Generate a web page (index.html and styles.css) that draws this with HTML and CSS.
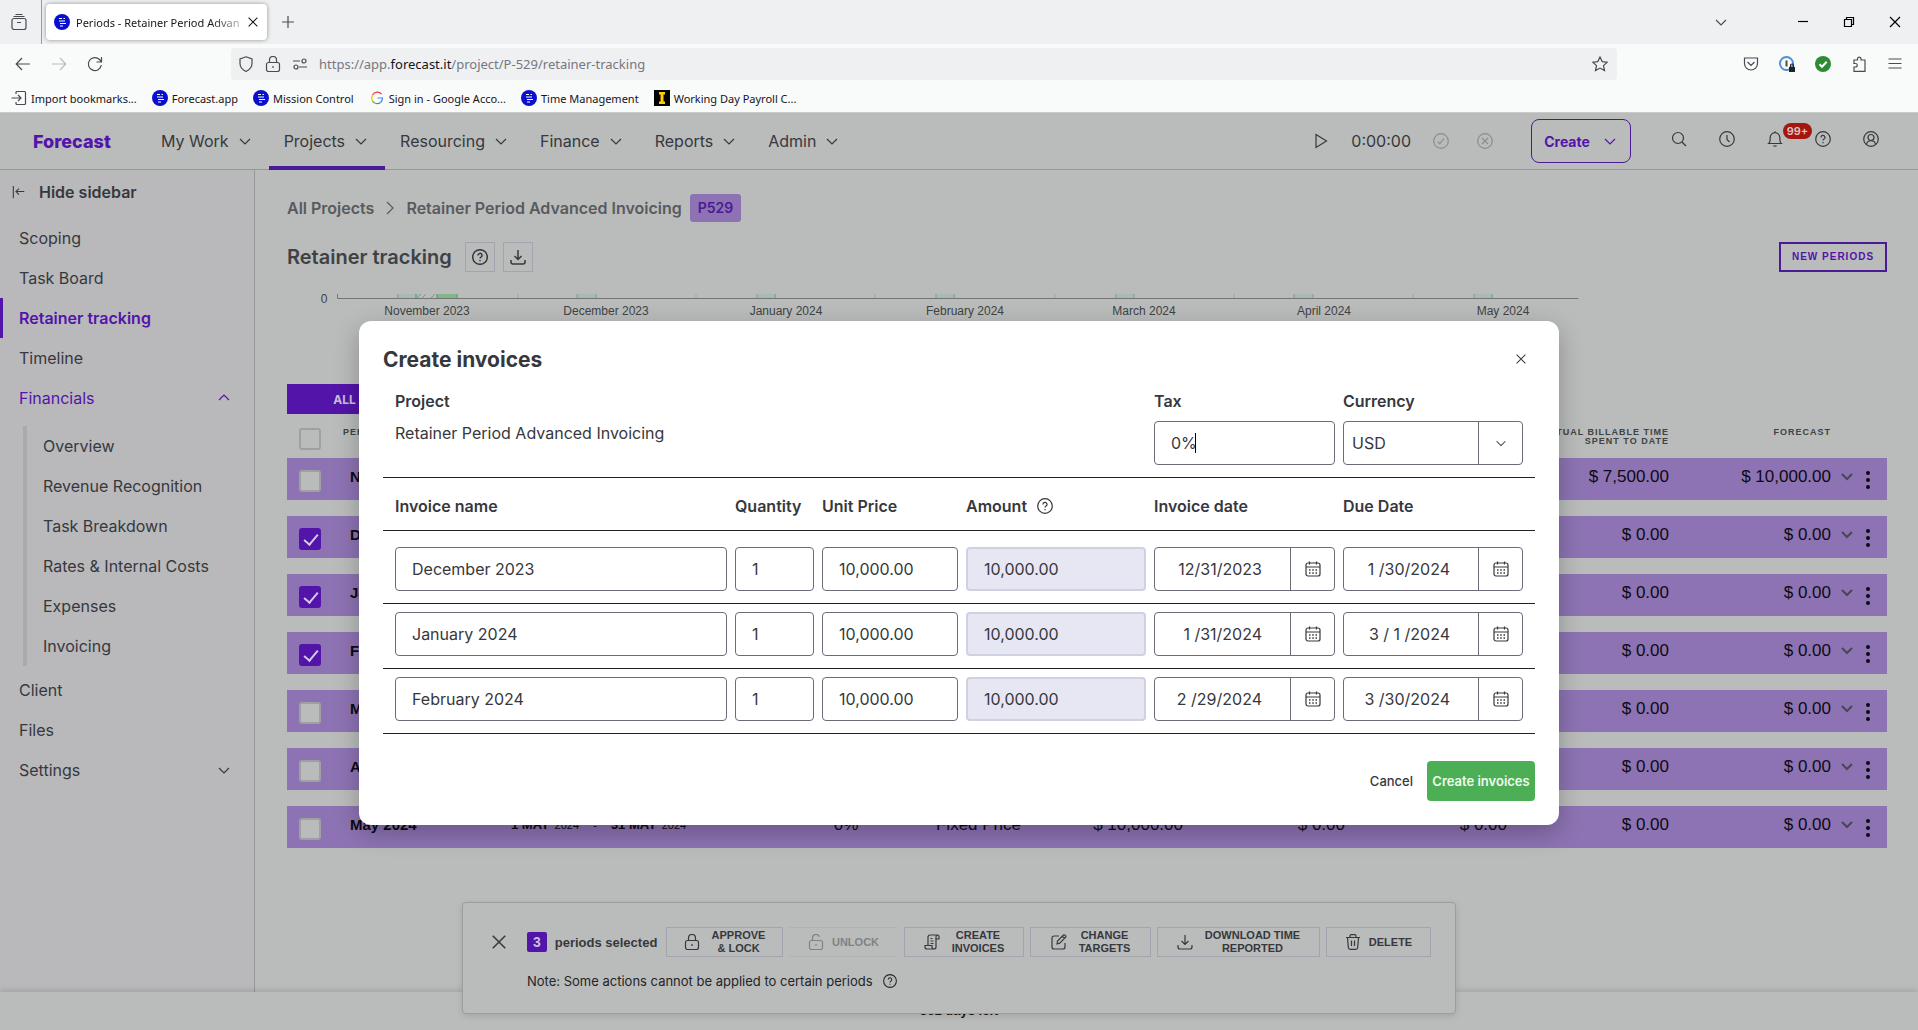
FILE: index.html
```html
<!DOCTYPE html>
<html lang="en">
<head>
    <meta charset="UTF-8">
    <meta name="viewport" content="width=device-width, initial-scale=1.0">
    <title>Periods - Retainer Period Advanced Invoicing</title>
    <link rel="stylesheet" href="styles.css">
</head>
<body>
    <!-- Shared icons -->
    <svg class="sprite" aria-hidden="true">
        <symbol id="i-down" viewBox="0 0 16 16"><path d="M3 6l5 5 5-5"/></symbol>
        <symbol id="i-up" viewBox="0 0 16 16"><path d="M3 10l5-5 5 5"/></symbol>
        <symbol id="i-right" viewBox="0 0 16 16"><path d="M5 2l6 6-6 6"/></symbol>
        <symbol id="i-x" viewBox="0 0 16 16"><path d="M3 3l10 10M13 3L3 13"/></symbol>
        <symbol id="i-help" viewBox="0 0 16 16"><circle cx="8" cy="8" r="7.3"/><path d="M6 6.4a2 2 0 1 1 3 1.7c-.7.4-1 .8-1 1.500M8 11v1.200"/></symbol>
        <symbol id="i-download" viewBox="0 0 16 16"><path d="M8 1v9.500M4.500 7L8 10.500 11.500 7M1 11v2a2 2 0 0 0 2 2h10a2 2 0 0 0 2-2v-2"/></symbol>
        <symbol id="i-logo" viewBox="0 0 16 16"><circle cx="8" cy="8" r="8" fill="#0a0fce" stroke="none"/><path d="M5 4.500h3M9.500 4.500h1.500M5 7h6M6 9.500h6M6 12h3" stroke="#fff" stroke-width="1"/></symbol>
        <symbol id="i-cal" viewBox="0 0 16 16"><rect x="1" y="2" width="14" height="13" rx="2"/><path d="M1 6h14M4.500 .5v3M11.500 .5v3"/><path d="M4 9h1.500M7.250 9h1.500M10.500 9H12M4 12h1.500M7.250 12h1.500M10.500 12H12" stroke-width="1.500"/></symbol>
        <symbol id="i-dots" viewBox="0 0 6 18"><circle cx="3" cy="2" r="2"/><circle cx="3" cy="9" r="2"/><circle cx="3" cy="16" r="2"/></symbol>
        <symbol id="i-lock" viewBox="0 0 16 16"><rect x="1.500" y="6.500" width="13" height="9" rx="2"/><path d="M4.500 6.500V4a3.500 3.500 0 0 1 7 0v2.500M8 10v2"/></symbol>
        <symbol id="i-unlock" viewBox="0 0 16 16"><rect x="1.500" y="6.500" width="13" height="9" rx="2"/><path d="M4.500 6.500V4a3.500 3.500 0 0 1 6.800-1.200M8 10v2"/></symbol>
    </svg>

    <div class="browser">
        <div class="tab-bar">
            <button class="tab-view" aria-label="Recent browsing">
                <svg class="icon16" viewBox="0 0 16 16"><rect x="1" y="4.500" width="14" height="11" rx="2"/><path d="M2.500 2.500h11M4.500 .5h7M6 8.500h4"/></svg>
            </button>
            <div class="tab">
                <svg class="icon16"><use href="#i-logo"/></svg>
                <span class="tab-title">Periods - Retainer Period Advan</span>
                <button class="tab-close" aria-label="Close tab"><svg class="icon14"><use href="#i-x"/></svg></button>
            </div>
            <button class="tab-new" aria-label="New tab"><svg class="icon16" viewBox="0 0 16 16"><path d="M8 2v12M2 8h12"/></svg></button>
            <div class="window-buttons">
                <button aria-label="List tabs"><svg class="icon16"><use href="#i-down"/></svg></button>
                <span class="window-gap"></span>
                <button class="dark" aria-label="Minimize"><svg class="icon12" viewBox="0 0 12 12"><path d="M1 5.500h10"/></svg></button>
                <button class="dark" aria-label="Restore"><svg class="icon12" viewBox="0 0 12 12"><path d="M1.500 3.500h7v7h-7zM3.500 3V1.500h7v7H9"/></svg></button>
                <button class="dark" aria-label="Close"><svg class="icon12" viewBox="0 0 12 12"><path d="M1 1l10 10M11 1L1 11"/></svg></button>
            </div>
        </div>

        <div class="nav-bar">
            <div class="nav-buttons">
                <button aria-label="Back"><svg class="icon16" viewBox="0 0 16 16"><path d="M15 8H1.500M7 2L1.200 8 7 14"/></svg></button>
                <button class="faded" aria-label="Forward"><svg class="icon16" viewBox="0 0 16 16"><path d="M1 8h13.500M9 2l5.800 6L9 14"/></svg></button>
                <button aria-label="Reload"><svg class="icon16" viewBox="0 0 16 16"><path d="M14.300 9A6.500 6.500 0 1 1 12.500 3.500L14.300 5.500M14.500 1v5h-5"/></svg></button>
            </div>
            <div class="url-box">
                <svg class="icon16" viewBox="0 0 16 16"><path d="M8 .8L14 3v4.500c0 4-3 6.500-6 8-3-1.500-6-4-6-8V3z"/></svg>
                <svg class="icon16"><use href="#i-lock"/></svg>
                <svg class="icon16" viewBox="0 0 16 16"><path d="M1 5h7M7 11h8"/><circle cx="12" cy="5" r="2"/><circle cx="4" cy="11" r="2"/></svg>
                <span class="url">https://app.<b>forecast.it</b>/project/P-529/retainer-tracking</span>
                <svg class="icon16 star" viewBox="0 0 16 16"><path d="M8 1l2.200 4.600 5 .6-3.700 3.400 1 5L8 12.100l-4.500 2.500 1-5L.8 6.200l5-.6z"/></svg>
            </div>
            <div class="ext-buttons">
                <svg class="icon16" viewBox="0 0 16 16"><path d="M1.500 2h13v5.500a6.500 6.500 0 0 1-13 0zM4.500 6L8 9.500 11.500 6"/></svg>
                <svg class="icon16" viewBox="0 0 16 16"><circle cx="7.500" cy="7.500" r="6.500" stroke="#4f8fdb" stroke-width="2"/><path d="M7.500 4.500v6" stroke-width="2"/><path d="M10 11h6v5h-6z" fill="#222" stroke="none"/><path d="M11.500 11V9.500a1.500 1.500 0 0 1 3 0V11" stroke="#222"/></svg>
                <svg class="icon16" viewBox="0 0 16 16"><circle cx="8" cy="8" r="8" fill="#2f8a35" stroke="none"/><path d="M4.500 8.200L7 10.800l4.700-5" stroke="#fff" stroke-width="2"/></svg>
                <svg class="icon16" viewBox="0 0 16 16"><path d="M3 15.300V11h1.500a1.700 1.700 0 0 0 0-3.500H3V4h3.500V2.500a1.800 1.800 0 0 1 3.500 0V4h4v11.300z"/></svg>
                <svg class="icon16" viewBox="0 0 16 16"><path d="M1.500 3h13M1.500 7.500h13M1.500 12h13"/></svg>
            </div>
        </div>

        <div class="bookmarks">
            <a href="#"><svg class="icon16" viewBox="0 0 16 16"><path d="M5 4V2.500a1 1 0 0 1 1-1h7.500a1 1 0 0 1 1 1v11a1 1 0 0 1-1 1H6a1 1 0 0 1-1-1V12M.5 8H10M7 5l3 3-3 3"/></svg>Import bookmarks...</a>
            <a href="#"><svg class="icon16"><use href="#i-logo"/></svg>Forecast.app</a>
            <a href="#"><svg class="icon16"><use href="#i-logo"/></svg>Mission Control</a>
            <a href="#"><svg class="icon16" viewBox="0 0 16 16" stroke-width="2"><path d="M12.600 4.200A5.500 5.500 0 0 0 3.500 5" stroke="#ea4335"/><path d="M3.500 5a6 6 0 0 0 0 6" stroke="#fbbc05"/><path d="M3.500 11a5.500 5.500 0 0 0 8 1.500" stroke="#34a853"/><path d="M11.500 12.500A5.500 5.500 0 0 0 13.500 8H8.500" stroke="#4285f4"/></svg>Sign in - Google Acco...</a>
            <a href="#"><svg class="icon16"><use href="#i-logo"/></svg>Time Management</a>
            <a href="#"><svg class="icon16" viewBox="0 0 16 16"><path d="M0 0h16v16H0z" fill="#000" stroke="none"/><path d="M5 2h6v2.500H9.500v7H11V14H5v-2.500h1.500v-7H5z" fill="#fc0" stroke="none"/></svg>Working Day Payroll C...</a>
        </div>
    </div>

    <div class="app">
        <header class="app-header">
            <a class="logo" href="#">Forecast</a>
            <nav class="main-nav">
                <a href="#">My Work <svg class="icon16"><use href="#i-down"/></svg></a>
                <a href="#" class="active">Projects <svg class="icon16"><use href="#i-down"/></svg></a>
                <a href="#">Resourcing <svg class="icon16"><use href="#i-down"/></svg></a>
                <a href="#">Finance <svg class="icon16"><use href="#i-down"/></svg></a>
                <a href="#">Reports <svg class="icon16"><use href="#i-down"/></svg></a>
                <a href="#">Admin <svg class="icon16"><use href="#i-down"/></svg></a>
            </nav>
            <div class="timer">
                <button aria-label="Start timer"><svg class="icon16" viewBox="0 0 16 16"><path d="M3 1.500L13.500 8 3 14.500z"/></svg></button>
                <span>0:00:00</span>
                <button class="faded" aria-label="Save timer"><svg class="icon16" viewBox="0 0 16 16"><circle cx="8" cy="8" r="7.300"/><path d="M4.800 8.500l2 2.300 4.200-5.500"/></svg></button>
                <button class="faded" aria-label="Discard timer"><svg class="icon16" viewBox="0 0 16 16"><circle cx="8" cy="8" r="7.300"/><path d="M5 5l6 6M11 5l-6 6"/></svg></button>
            </div>
            <button class="create-button">Create <svg class="icon16"><use href="#i-down"/></svg></button>
            <div class="header-icons">
                <button aria-label="Search"><svg class="icon16" viewBox="0 0 16 16"><circle cx="7" cy="7" r="5.500"/><path d="M11 11l4 4"/></svg></button>
                <button aria-label="Recent"><svg class="icon16" viewBox="0 0 16 16"><circle cx="8" cy="8" r="7.300"/><path d="M8 4v4.500l2.500 2.500"/></svg></button>
                <button class="bell" aria-label="Notifications"><svg class="icon16" viewBox="0 0 16 16"><path d="M1.800 12.500C3 11.500 3.200 10 3.200 6.500a4.800 4.800 0 0 1 9.600 0c0 3.500.2 5 1.400 6zM8 1.700V.3M6.500 14.500c.5 1 2.500 1 3 0"/></svg><span class="badge">99+</span></button>
                <button aria-label="Help"><svg class="icon16"><use href="#i-help"/></svg></button>
                <button aria-label="Account"><svg class="icon16" viewBox="0 0 16 16"><circle cx="8" cy="8" r="7.300"/><circle cx="8" cy="6.500" r="3"/><path d="M3.500 13.500c.5-5 8.500-5 9 0"/></svg></button>
            </div>
        </header>

        <div class="app-body">
            <aside class="sidebar">
                <button class="hide-sidebar"><svg class="icon14" viewBox="0 0 16 16"><path d="M1.500 1v14M14 7.500H4.500M8 4L4.500 7.500 8 11"/></svg>Hide sidebar</button>
                <nav class="side-nav">
                    <a href="#">Scoping</a>
                    <a href="#">Task Board</a>
                    <a href="#" class="current">Retainer tracking</a>
                    <a href="#">Timeline</a>
                    <a href="#" class="open">Financials <svg class="icon16"><use href="#i-up"/></svg></a>
                    <div class="sub-nav">
                        <a href="#">Overview</a>
                        <a href="#">Revenue Recognition</a>
                        <a href="#">Task Breakdown</a>
                        <a href="#">Rates &amp; Internal Costs</a>
                        <a href="#">Expenses</a>
                        <a href="#">Invoicing</a>
                    </div>
                    <a href="#">Client</a>
                    <a href="#">Files</a>
                    <a href="#">Settings <svg class="icon16"><use href="#i-down"/></svg></a>
                </nav>
            </aside>

            <main class="content">
                <div class="breadcrumb">
                    <a href="#">All Projects</a>
                    <svg class="icon16"><use href="#i-right"/></svg>
                    <a href="#">Retainer Period Advanced Invoicing</a>
                    <span class="project-tag">P529</span>
                </div>
                <div class="title-row">
                    <h1>Retainer tracking</h1>
                    <button class="square" aria-label="Help"><svg class="icon16"><use href="#i-help"/></svg></button>
                    <button class="square" aria-label="Download"><svg class="icon16"><use href="#i-download"/></svg></button>
                    <button class="new-periods">NEW PERIODS</button>
                </div>

                <div class="chart">
                    <svg width="1300" height="30" viewBox="0 0 1300 30">
                        <path d="M110 0h22v4h-22zM290 0h19v4h-19zM470 0h19v4h-19zM649 0h19v4h-19zM829 0h18v4h-18zM1007 0h19v4h-19zM1187 0h19v4h-19z" fill="#a9b9b3" stroke="none"/>
                        <path d="M150 0h20v4h-20z" fill="#83b58a" stroke="none"/>
                        <path d="M130 4l4-4M135 4l4-4M144 4l4-4" stroke="#8a8f8d"/>
                        <path d="M111 0v4M290 0v4M309 0v4M470 0v4M488 0v4M649 0v4M667 0v4M829 0v4M847 0v4M1007 0v4M1026 0v4M1187 0v4M1205 0v4" stroke="#7d9b90"/>
                        <path d="M129 0v4M150 0v4M170 0v4" stroke="#4f9a58"/>
                        <path d="M231 0v4M409 0v4M588 0v4M768 0v4M947 0v4M1126 0v4" stroke="#a0a3a2"/>
                        <path d="M50.500 0v4.500h1241" stroke="#747676"/>
                        <text x="37" y="9">0</text>
                        <text x="140" y="21">November 2023</text>
                        <text x="319" y="21">December 2023</text>
                        <text x="499" y="21">January 2024</text>
                        <text x="678" y="21">February 2024</text>
                        <text x="857" y="21">March 2024</text>
                        <text x="1037" y="21">April 2024</text>
                        <text x="1216" y="21">May 2024</text>
                    </svg>
                </div>

                <button class="filter-all">ALL</button>

                <table class="periods">
                    <colgroup>
                        <col class="c-check"><col class="c-name"><col><col class="c-pct"><col class="c-type">
                        <col class="c-money"><col class="c-money"><col class="c-money"><col class="c-money"><col class="c-money">
                        <col class="c-actions">
                    </colgroup>
                    <thead>
                        <tr>
                            <th><input type="checkbox" aria-label="Select all"></th>
                            <th class="left">PERIOD</th><th></th><th></th><th></th><th></th><th></th><th></th>
                            <th>ACTUAL BILLABLE TIME SPENT TO DATE</th>
                            <th>FORECAST</th>
                            <th></th>
                        </tr>
                    </thead>
                    <tbody>
                        <tr>
                            <td><input type="checkbox" aria-label="November 2023"></td>
                            <td class="name">November 2023</td>
                            <td class="dates"><b>1 NOV</b> 2023 <i>-</i> <b>30 NOV</b> 2023</td>
                            <td class="pct">0%</td><td>Fixed Price</td><td>$ 10,000.00</td><td>$ 0.00</td><td>$ 0.00</td><td>$ 7,500.00</td><td>$ 10,000.00</td>
                            <td class="actions"><svg class="icon16"><use href="#i-down"/></svg><svg class="dots"><use href="#i-dots"/></svg></td>
                        </tr>
                        <tr>
                            <td><input type="checkbox" checked aria-label="December 2023"></td>
                            <td class="name">December 2023</td>
                            <td class="dates"><b>1 DEC</b> 2023 <i>-</i> <b>31 DEC</b> 2023</td>
                            <td class="pct">0%</td><td>Fixed Price</td><td>$ 10,000.00</td><td>$ 0.00</td><td>$ 0.00</td><td>$ 0.00</td><td>$ 0.00</td>
                            <td class="actions"><svg class="icon16"><use href="#i-down"/></svg><svg class="dots"><use href="#i-dots"/></svg></td>
                        </tr>
                        <tr>
                            <td><input type="checkbox" checked aria-label="January 2024"></td>
                            <td class="name">January 2024</td>
                            <td class="dates"><b>1 JAN</b> 2024 <i>-</i> <b>31 JAN</b> 2024</td>
                            <td class="pct">0%</td><td>Fixed Price</td><td>$ 10,000.00</td><td>$ 0.00</td><td>$ 0.00</td><td>$ 0.00</td><td>$ 0.00</td>
                            <td class="actions"><svg class="icon16"><use href="#i-down"/></svg><svg class="dots"><use href="#i-dots"/></svg></td>
                        </tr>
                        <tr>
                            <td><input type="checkbox" checked aria-label="February 2024"></td>
                            <td class="name">February 2024</td>
                            <td class="dates"><b>1 FEB</b> 2024 <i>-</i> <b>29 FEB</b> 2024</td>
                            <td class="pct">0%</td><td>Fixed Price</td><td>$ 10,000.00</td><td>$ 0.00</td><td>$ 0.00</td><td>$ 0.00</td><td>$ 0.00</td>
                            <td class="actions"><svg class="icon16"><use href="#i-down"/></svg><svg class="dots"><use href="#i-dots"/></svg></td>
                        </tr>
                        <tr>
                            <td><input type="checkbox" aria-label="March 2024"></td>
                            <td class="name">March 2024</td>
                            <td class="dates"><b>1 MAR</b> 2024 <i>-</i> <b>31 MAR</b> 2024</td>
                            <td class="pct">0%</td><td>Fixed Price</td><td>$ 10,000.00</td><td>$ 0.00</td><td>$ 0.00</td><td>$ 0.00</td><td>$ 0.00</td>
                            <td class="actions"><svg class="icon16"><use href="#i-down"/></svg><svg class="dots"><use href="#i-dots"/></svg></td>
                        </tr>
                        <tr>
                            <td><input type="checkbox" aria-label="April 2024"></td>
                            <td class="name">April 2024</td>
                            <td class="dates"><b>1 APR</b> 2024 <i>-</i> <b>30 APR</b> 2024</td>
                            <td class="pct">0%</td><td>Fixed Price</td><td>$ 10,000.00</td><td>$ 0.00</td><td>$ 0.00</td><td>$ 0.00</td><td>$ 0.00</td>
                            <td class="actions"><svg class="icon16"><use href="#i-down"/></svg><svg class="dots"><use href="#i-dots"/></svg></td>
                        </tr>
                        <tr>
                            <td><input type="checkbox" aria-label="May 2024"></td>
                            <td class="name">May 2024</td>
                            <td class="dates"><b>1 MAY</b> 2024 <i>-</i> <b>31 MAY</b> 2024</td>
                            <td class="pct">0%</td><td>Fixed Price</td><td>$ 10,000.00</td><td>$ 0.00</td><td>$ 0.00</td><td>$ 0.00</td><td>$ 0.00</td>
                            <td class="actions"><svg class="icon16"><use href="#i-down"/></svg><svg class="dots"><use href="#i-dots"/></svg></td>
                        </tr>
                    </tbody>
                </table>
            </main>
        </div>

        <footer class="app-footer">361 days left</footer>

        <!-- Bulk actions for the ticked periods -->
        <div class="bulk-bar">
            <div class="bulk-row">
                <button class="bulk-close" aria-label="Clear selection"><svg class="icon20"><use href="#i-x"/></svg></button>
                <span class="count">3</span>
                <span class="selected">periods selected</span>
                <div class="bulk-buttons">
                    <button class="w-approve"><svg class="icon16"><use href="#i-lock"/></svg><span>APPROVE<br>&amp; LOCK</span></button>
                    <button class="w-unlock" disabled><svg class="icon16"><use href="#i-unlock"/></svg><span>UNLOCK</span></button>
                    <button class="w-create"><svg class="icon16" viewBox="0 0 16 16"><path d="M4 11.500V3a2 2 0 0 1 2-2h7.500a1.500 1.500 0 0 1 1.500 1.500V5h-3M12 5V3a2 2 0 0 1 1.500-2M12 5v8a2 2 0 0 1-4 0v-1.500H1V13a2 2 0 0 0 2 2h7M6.500 4.500h2M6.500 7H9.500M6.500 9.500H9.500"/></svg><span>CREATE<br>INVOICES</span></button>
                    <button class="w-change"><svg class="icon16" viewBox="0 0 16 16"><path d="M8 2H3a2 2 0 0 0-2 2v9a2 2 0 0 0 2 2h9a2 2 0 0 0 2-2V9M6 10l.5-3 6-6c1-.8 3 1 2.200 2.200l-6 6zM11.500 2.500l2 2"/></svg><span>CHANGE<br>TARGETS</span></button>
                    <button class="w-download"><svg class="icon16"><use href="#i-download"/></svg><span>DOWNLOAD TIME<br>REPORTED</span></button>
                    <button class="w-delete"><svg class="icon16" viewBox="0 0 16 16"><path d="M1 3.500h14M5 3.500V2a1.300 1.300 0 0 1 1.300-1.300h3.400A1.300 1.300 0 0 1 11 2v1.500M2.500 3.500l.8 10a2 2 0 0 0 2 1.800h5.400a2 2 0 0 0 2-1.800l.8-10M6.500 6.500V12M9.500 6.500V12"/></svg><span>DELETE</span></button>
                </div>
            </div>
            <p class="bulk-note">Note: Some actions cannot be applied to certain periods <svg class="icon14"><use href="#i-help"/></svg></p>
        </div>

        <div class="overlay">
            <form class="modal" role="dialog" aria-labelledby="modal-title">
                <div class="modal-head">
                    <h2 id="modal-title">Create invoices</h2>
                    <button type="button" aria-label="Close"><svg class="icon14"><use href="#i-x"/></svg></button>
                </div>
                <div class="modal-top">
                    <div class="project">
                        <span class="label">Project</span>
                        <span>Retainer Period Advanced Invoicing</span>
                    </div>
                    <div class="field tax">
                        <label class="label" for="tax">Tax</label>
                        <div class="tax-box">
                            <input class="box" id="tax" type="text" value="0%">
                            <span class="caret"></span>
                        </div>
                    </div>
                    <div class="field">
                        <label class="label" for="currency">Currency</label>
                        <div class="combo">
                            <select id="currency"><option>USD</option><option>EUR</option><option>GBP</option></select>
                            <span class="combo-icon"><svg class="icon14"><use href="#i-down"/></svg></span>
                        </div>
                    </div>
                </div>

                <table class="invoices">
                    <colgroup><col><col class="c-qty"><col class="c-price"><col class="c-amount"><col class="c-invoice"><col class="c-due"></colgroup>
                    <thead>
                        <tr>
                            <th>Invoice name</th><th>Quantity</th><th>Unit Price</th>
                            <th>Amount <svg class="icon16"><use href="#i-help"/></svg></th>
                            <th>Invoice date</th><th>Due Date</th>
                        </tr>
                    </thead>
                    <tbody>
                        <tr>
                            <td><input class="box" type="text" value="December 2023" aria-label="Invoice name"></td>
                            <td><input class="box" type="text" value="1" aria-label="Quantity"></td>
                            <td><input class="box" type="text" value="10,000.00" aria-label="Unit price"></td>
                            <td><input class="box" type="text" value="10,000.00" disabled aria-label="Amount"></td>
                            <td><div class="combo date"><input type="text" value="12/31/2023" aria-label="Invoice date"><button type="button" class="combo-icon" aria-label="Pick date"><svg class="icon16"><use href="#i-cal"/></svg></button></div></td>
                            <td><div class="combo date"><input type="text" value="1 /30/2024" aria-label="Due date"><button type="button" class="combo-icon" aria-label="Pick date"><svg class="icon16"><use href="#i-cal"/></svg></button></div></td>
                        </tr>
                        <tr>
                            <td><input class="box" type="text" value="January 2024" aria-label="Invoice name"></td>
                            <td><input class="box" type="text" value="1" aria-label="Quantity"></td>
                            <td><input class="box" type="text" value="10,000.00" aria-label="Unit price"></td>
                            <td><input class="box" type="text" value="10,000.00" disabled aria-label="Amount"></td>
                            <td><div class="combo date"><input type="text" value="1 /31/2024" aria-label="Invoice date"><button type="button" class="combo-icon" aria-label="Pick date"><svg class="icon16"><use href="#i-cal"/></svg></button></div></td>
                            <td><div class="combo date"><input type="text" value="3 / 1 /2024" aria-label="Due date"><button type="button" class="combo-icon" aria-label="Pick date"><svg class="icon16"><use href="#i-cal"/></svg></button></div></td>
                        </tr>
                        <tr>
                            <td><input class="box" type="text" value="February 2024" aria-label="Invoice name"></td>
                            <td><input class="box" type="text" value="1" aria-label="Quantity"></td>
                            <td><input class="box" type="text" value="10,000.00" aria-label="Unit price"></td>
                            <td><input class="box" type="text" value="10,000.00" disabled aria-label="Amount"></td>
                            <td><div class="combo date"><input type="text" value="2 /29/2024" aria-label="Invoice date"><button type="button" class="combo-icon" aria-label="Pick date"><svg class="icon16"><use href="#i-cal"/></svg></button></div></td>
                            <td><div class="combo date"><input type="text" value="3 /30/2024" aria-label="Due date"><button type="button" class="combo-icon" aria-label="Pick date"><svg class="icon16"><use href="#i-cal"/></svg></button></div></td>
                        </tr>
                    </tbody>
                </table>

                <div class="modal-actions">
                    <button type="button" class="cancel">Cancel</button>
                    <button type="submit" class="submit">Create invoices</button>
                </div>
            </form>
        </div>
    </div>
</body>
</html>
```

FILE: styles.css
```css
:root {
    --page: #babcbb;
    --ink: #36383d;
    --purple: #5314a9;
    --purple-dark: #4b1b95;
    --row: #8d73b3;
    --line: #94979c;
    --field-line: #6b6c78;
}

* {
    box-sizing: border-box;
}

body {
    margin: 0;
    height: 100vh;
    display: flex;
    flex-direction: column;
    overflow: hidden;
    font-family: Inter, "Liberation Sans", sans-serif;
    font-size: 16px;
    color: var(--ink);
    background: var(--page);
}

button {
    font: inherit;
    color: inherit;
    background: none;
    border: none;
    padding: 0;
    display: flex;
    align-items: center;
    justify-content: center;
    cursor: pointer;
}

a {
    color: inherit;
    text-decoration: none;
}

svg {
    flex: none;
    fill: none;
    stroke: currentColor;
    stroke-width: 1.2;
}

.sprite {
    position: absolute;
    width: 0;
    height: 0;
}

.icon12 { width: 12px; height: 12px; }
.icon14 { width: 14px; height: 14px; }
.icon16 { width: 16px; height: 16px; }
.icon20 { width: 20px; height: 20px; }

/* Browser frame */
.browser {
    flex: none;
    font-family: "Noto Sans", "Open Sans", sans-serif;
    font-size: 11px;
    color: #15141a;
    background: #f9fafa;
    border-bottom: 1px solid #c9cac9;
}

.browser svg {
    color: #4a4a52;
}

.tab-bar {
    height: 44px;
    display: flex;
    align-items: center;
    background: #eff0f2;
}

.tab-view {
    width: 42px;
    height: 44px;
    padding-right: 4px;
    border-right: 1px solid #9a9aa0;
}

.tab {
    width: 221px;
    height: 36px;
    margin-left: 4px;
    padding: 0 8px;
    display: flex;
    align-items: center;
    gap: 6px;
    background: #fff;
    border-radius: 4px;
    box-shadow: 0 0 4px rgba(0, 0, 0, 0.4);
}

.tab-title {
    flex: 1;
    white-space: nowrap;
    -webkit-mask-image: linear-gradient(to left, rgba(0, 0, 0, 0.3), #000 30px);
    mask-image: linear-gradient(to left, rgba(0, 0, 0, 0.3), #000 30px);
}

.tab-close {
    width: 16px;
}

.tab-close svg {
    color: #15141a;
}

.tab-new {
    margin-left: 13px;
}

.window-buttons {
    margin-left: auto;
    display: flex;
    align-items: center;
}

.window-buttons button {
    width: 46px;
    height: 44px;
}

.window-buttons .dark svg {
    color: #000;
}

.window-gap {
    width: 36px;
}

.nav-bar {
    height: 40px;
    display: flex;
    align-items: center;
}

.nav-buttons {
    width: 231px;
    display: flex;
    gap: 20px;
    padding-left: 15px;
}

.faded {
    opacity: 0.35;
}

.url-box {
    flex: 1;
    height: 32px;
    padding: 0 9px 0 7px;
    display: flex;
    align-items: center;
    gap: 11px;
    background: #eff0f2;
    border-radius: 4px;
}

.url {
    flex: 1;
    font-size: 13px;
    color: #77777d;
}

.url b {
    font-weight: 400;
    color: #15141a;
}

.ext-buttons {
    display: flex;
    gap: 20px;
    padding: 0 15px 0 126px;
}

.bookmarks {
    height: 28px;
    display: flex;
    align-items: center;
    gap: 15px;
    padding-left: 11px;
}

.bookmarks a {
    display: flex;
    align-items: center;
    gap: 4px;
}

/* App header */
.app {
    flex: 1;
    min-height: 0;
    position: relative;
    display: flex;
    flex-direction: column;
}

.app-header {
    flex: none;
    height: 57px;
    display: flex;
    align-items: center;
    border-bottom: 1px solid var(--line);
}

.logo {
    width: 146px;
    padding-left: 33px;
    font-weight: 800;
    font-size: 18px;
    color: var(--purple);
}

.main-nav {
    height: 57px;
    display: flex;
}

.main-nav a {
    display: flex;
    align-items: center;
    gap: 8px;
    padding: 0 16px 0 15px;
}

.main-nav .active {
    box-shadow: inset 0 -4px var(--purple-dark);
}

.timer {
    margin-left: auto;
    display: flex;
    align-items: center;
    gap: 28px;
}

.timer span {
    margin: 0 -6px;
}

.create-button {
    width: 100px;
    height: 44px;
    margin: 0 40px 0 38px;
    gap: 12px;
    font-weight: 700;
    font-size: 14px;
    color: var(--purple);
    border: 1px solid var(--purple-dark);
    border-radius: 8px;
}

.header-icons {
    display: flex;
    gap: 32px;
    padding: 0 39px 4px 0;
}

.bell {
    position: relative;
}

.badge {
    position: absolute;
    left: 16px;
    top: -8px;
    width: 29px;
    height: 16px;
    line-height: 16px;
    font-size: 11px;
    font-weight: 600;
    color: #d8c6c6;
    background: #a6150f;
    border-radius: 8px;
}

/* Sidebar */
.app-body {
    flex: 1;
    min-height: 0;
    display: flex;
}

.sidebar {
    width: 255px;
    flex: none;
    background: #b9b9bb;
    border-right: 1px solid var(--line);
}

.hide-sidebar {
    height: 44px;
    margin-bottom: 4px;
    padding-left: 12px;
    gap: 13px;
    font-weight: 600;
}

.side-nav a {
    height: 40px;
    display: flex;
    align-items: center;
    justify-content: space-between;
    padding: 0 22px 0 19px;
}

.side-nav .current {
    font-weight: 600;
    color: var(--purple);
    box-shadow: inset 3px 0 var(--purple);
}

.side-nav .open {
    color: var(--purple);
}

.sub-nav {
    margin: 8px 0 4px 23px;
    border-left: 4px solid #a9a9b0;
}

.sub-nav a {
    padding-left: 16px;
}

/* Content */
.content {
    flex: 1;
    min-width: 0;
    padding: 24px 31px 0 32px;
}

.breadcrumb {
    height: 28px;
    display: flex;
    align-items: center;
    gap: 8px;
    font-weight: 600;
    color: #585a5f;
}

.project-tag {
    height: 28px;
    line-height: 28px;
    padding: 0 8px;
    font-size: 14px;
    color: var(--purple-dark);
    background: var(--row);
    border-radius: 3px;
}

.title-row {
    height: 31px;
    margin-top: 19px;
    display: flex;
    align-items: center;
    gap: 8px;
}

h1 {
    margin: 0 5px 0 0;
    font-size: 20px;
    font-weight: 600;
    color: #404145;
}

.square {
    width: 30px;
    height: 30px;
    border: 1px solid #a4a4ae;
}

.square svg {
    stroke-width: 1.5;
}

.new-periods {
    width: 108px;
    height: 30px;
    margin-left: auto;
    font: bold 10px "Liberation Sans", sans-serif;
    letter-spacing: 1px;
    color: var(--purple);
    border: 2px solid var(--purple-dark);
}

.chart {
    height: 90px;
    margin-top: 22px;
}

.chart svg {
    display: block;
    stroke-width: 1;
}

.chart text {
    font: 12px "Liberation Sans", sans-serif;
    fill: #404243;
    stroke: none;
    text-anchor: middle;
}

.filter-all {
    width: 115px;
    height: 30px;
    font-size: 12px;
    font-weight: 700;
    color: #c9bfdc;
    background: var(--purple);
}

.periods {
    width: 100%;
    margin-top: 14px;
    table-layout: fixed;
    border-collapse: separate;
    border-spacing: 0;
    font-family: "Liberation Sans", sans-serif;
    color: #0c0a12;
}

.c-check { width: 56px; }
.c-name { width: 161px; }
.c-pct { width: 132px; }
.c-type { width: 109px; }
.c-money { width: 162px; }
.c-actions { width: 56px; }

.periods th {
    height: 30px;
    padding: 0;
    vertical-align: top;
    text-align: right;
    font-size: 9px;
    line-height: 9px;
    letter-spacing: 1px;
    color: #404243;
}

.periods th.left {
    text-align: left;
}

.periods td {
    height: 58px;
    padding: 9px 0 0;
    vertical-align: top;
    text-align: right;
    font-size: 17px;
    line-height: 20px;
    white-space: nowrap;
    background: var(--row);
    border-bottom: 16px solid var(--page);
}

.periods td:first-child {
    padding-top: 12px;
}

.periods .name,
.periods .dates {
    text-align: left;
    padding-left: 7px;
    font-size: 15px;
    font-weight: 700;
}

.periods .dates {
    font-size: 11px;
    font-weight: 400;
}

.dates b {
    font-size: 13px;
    margin-right: 2px;
}

.dates i {
    margin: 0 11px;
    font-style: normal;
}

.periods .pct {
    text-align: center;
}

.actions svg {
    float: left;
    margin: 1px 0 0 8px;
    color: #4a4656;
    stroke-width: 2;
}

.actions .dots {
    width: 6px;
    height: 18px;
    margin: 4px 0 0 10px;
    fill: #0c0a12;
    stroke: none;
}

.periods input {
    appearance: none;
    display: block;
    width: 22px;
    height: 22px;
    margin: 0 0 0 12px;
    background: var(--page);
    border: 2px solid #9fa0a1;
    border-radius: 3px;
}

.periods input:checked {
    background: var(--purple);
    border-color: var(--purple);
}

.periods input:checked::after {
    content: "";
    display: block;
    width: 6px;
    height: 12px;
    margin: 1px 0 0 6px;
    border: solid #d5cbe6;
    border-width: 0 2px 2px 0;
    transform: rotate(40deg);
}

.app-footer {
    flex: none;
    height: 38px;
    text-align: center;
    font: bold 13px/38px "Liberation Sans", sans-serif;
    color: #17171a;
    background: var(--page);
    box-shadow: 0 -2px 6px rgba(0, 0, 0, 0.12);
}

/* Bulk bar */
.bulk-bar {
    position: absolute;
    left: 50%;
    bottom: 16px;
    width: 994px;
    height: 112px;
    margin-left: -497px;
    padding: 24px;
    background: var(--page);
    border: 1px solid #9c9e9e;
    border-radius: 4px;
    box-shadow: 0 2px 6px rgba(0, 0, 0, 0.12);
}

.bulk-row {
    height: 30px;
    display: flex;
    align-items: center;
    font-family: "Liberation Sans", sans-serif;
}

.bulk-close {
    width: 24px;
}

.count {
    width: 20px;
    height: 20px;
    margin: 0 8px 0 16px;
    line-height: 20px;
    text-align: center;
    font-size: 14px;
    font-weight: 700;
    color: #c9bfdc;
    background: var(--purple);
    border-radius: 2px;
}

.selected {
    width: 112px;
    font-size: 13px;
    font-weight: 700;
    white-space: nowrap;
}

.bulk-buttons {
    display: flex;
    gap: 6px;
}

.bulk-buttons button {
    height: 30px;
    font-size: 11px;
    line-height: 13px;
    font-weight: 700;
    border: 1px solid #a4a4ae;
}

.bulk-buttons button:disabled {
    color: #808283;
    border-color: #b0b2b2 transparent;
}

.bulk-buttons .icon16 {
    margin-right: 12px;
}

.bulk-buttons .w-unlock .icon16,
.bulk-buttons .w-delete .icon16 {
    margin-right: 8px;
}

.w-approve { width: 117px; }
.w-unlock { width: 109px; }
.w-create { width: 120px; }
.w-change { width: 121px; }
.w-download { width: 163px; }
.w-delete { width: 105px; }

.bulk-note {
    display: flex;
    align-items: center;
    gap: 10px;
    margin: 16px 0 0 40px;
    font-size: 13px;
    line-height: 16px;
    color: #232428;
}

/* Modal */
.overlay {
    position: absolute;
    inset: 0;
    display: flex;
    justify-content: center;
    align-items: flex-start;
    padding-top: 208px;
}

.modal {
    width: 1200px;
    max-width: 100%;
    padding: 24px;
    background: #fff;
    border-radius: 12px;
    box-shadow: 0 8px 24px rgba(0, 0, 0, 0.25);
}

.modal-head {
    height: 28px;
    display: flex;
    align-items: center;
    justify-content: space-between;
    padding-right: 7px;
}

h2 {
    margin: 0;
    font-size: 21px;
    font-weight: 700;
}

.modal-top {
    height: 104px;
    display: flex;
    gap: 8px;
    padding: 18px 12px 0;
}

.label {
    display: block;
    line-height: 20px;
    font-weight: 600;
}

.project {
    flex: 1;
    line-height: 20px;
}

.project .label {
    margin-bottom: 12px;
}

.field {
    width: 180px;
}

.field.tax {
    width: 181px;
}

.field .label {
    margin-bottom: 10px;
}

.box,
.combo {
    display: flex;
    width: 100%;
    height: 44px;
    font: 16px Inter, sans-serif;
    color: var(--ink);
    background: #fff;
    border: 1px solid var(--field-line);
    border-radius: 4px;
}

.box {
    padding: 0 16px;
}

.box:disabled {
    background: #e6e7f3;
    border: 2px solid #cfd0e0;
}

.combo select,
.combo input {
    flex: 1;
    min-width: 0;
    padding: 0 8px;
    font: inherit;
    color: inherit;
    background: none;
    border: none;
    appearance: none;
}

.combo.date input {
    text-align: right;
    padding: 0 28px 0 0;
}

.combo-icon {
    width: 44px;
    display: flex;
    align-items: center;
    justify-content: center;
    border-left: 1px solid var(--field-line);
}

.tax-box {
    position: relative;
}

/* text cursor shown in the focused tax field */
.caret {
    position: absolute;
    left: 41px;
    top: 12px;
    width: 1px;
    height: 20px;
    background: #000;
}

.invoices {
    width: 100%;
    table-layout: fixed;
    border-collapse: separate;
    border-spacing: 0;
    border-top: 1px solid #222;
}

.c-qty { width: 87px; }
.c-price { width: 144px; }
.c-amount { width: 188px; }
.c-invoice { width: 189px; }
.c-due { width: 196px; }

.invoices th,
.invoices td {
    padding: 8px 4px 12px;
    text-align: left;
    border-bottom: 1px solid #222;
}

.invoices th {
    height: 53px;
    padding: 8px 4px 4px;
    font-weight: 600;
}

.invoices th svg {
    margin-left: 6px;
    vertical-align: -2px;
}

.invoices tbody tr:first-child td {
    padding-top: 16px;
}

.invoices th:first-child,
.invoices td:first-child {
    padding-left: 12px;
}

.invoices th:last-child,
.invoices td:last-child {
    padding-right: 12px;
}

.modal-actions {
    display: flex;
    justify-content: flex-end;
    gap: 14px;
    padding-top: 27px;
    font-size: 13px;
    font-weight: 500;
}

.submit {
    width: 108px;
    height: 40px;
    font-weight: 600;
    color: #f1faf1;
    background: #4caf55;
    border-radius: 4px;
}
```
